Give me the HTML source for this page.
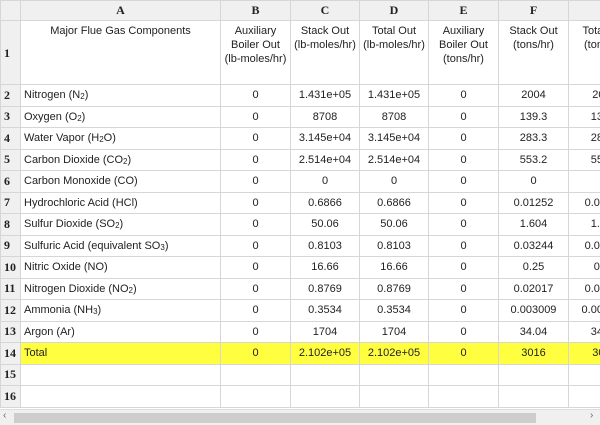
<!DOCTYPE html><html><head><style>
body{margin:0;width:600px;height:424px;overflow:hidden;background:#fff;position:relative;font-family:"Liberation Sans",Arial,sans-serif;font-size:11px;color:#222}
table{border-collapse:collapse;table-layout:fixed;position:absolute;left:0;top:0;width:640px}
td{border:1px solid #d6d6d6;padding:0 3px;height:20.5px;text-align:center;white-space:nowrap;overflow:hidden}
td.l{text-align:left}
tr.h td{background:#f0f0f0;font-family:"Liberation Serif",serif;font-weight:bold;font-size:12px;height:19px}
td.r{background:#f0f0f0;font-family:"Liberation Serif",serif;font-weight:bold;font-size:12px;text-align:left;padding:0 0 0 3px}
tr.t1 td{height:60px;vertical-align:top;padding-top:3px;line-height:14px;white-space:normal}
tr.t1 td.r{vertical-align:middle;padding-top:0}
tr.y td{background:#ffff40}
tr.y td.r{background:#f0f0f0}
.sb{position:absolute;left:0;top:409px;width:600px;height:15px;background:#f0f0f0;border-top:1px solid #ddd}
.th{position:absolute;left:14px;top:3px;width:522px;height:10px;background:#cdcdcd}
.ar{position:absolute;top:0;font-size:10px;color:#666}
sub{font-size:8px;vertical-align:-1px;line-height:0}
</style></head><body>
<table>
<colgroup><col style="width:20px"><col style="width:200px"><col style="width:70px"><col style="width:69px"><col style="width:69px"><col style="width:70px"><col style="width:70px"><col style="width:72px"></colgroup>
<tr class="h"><td></td><td>A</td><td>B</td><td>C</td><td>D</td><td>E</td><td>F</td><td>G</td></tr>
<tr class="t1"><td class="r">1</td><td>Major Flue Gas Components</td><td>Auxiliary Boiler Out (lb-moles/hr)</td><td>Stack Out (lb-moles/hr)</td><td>Total Out (lb-moles/hr)</td><td>Auxiliary Boiler Out (tons/hr)</td><td>Stack Out (tons/hr)</td><td>Total Out (tons/hr)</td></tr>
<tr><td class="r">2</td><td class="l">Nitrogen (N<sub>2</sub>)</td><td>0</td><td>1.431e+05</td><td>1.431e+05</td><td>0</td><td>2004</td><td>2004</td></tr>
<tr><td class="r">3</td><td class="l">Oxygen (O<sub>2</sub>)</td><td>0</td><td>8708</td><td>8708</td><td>0</td><td>139.3</td><td>139.3</td></tr>
<tr><td class="r">4</td><td class="l">Water Vapor (H<sub>2</sub>O)</td><td>0</td><td>3.145e+04</td><td>3.145e+04</td><td>0</td><td>283.3</td><td>283.3</td></tr>
<tr><td class="r">5</td><td class="l">Carbon Dioxide (CO<sub>2</sub>)</td><td>0</td><td>2.514e+04</td><td>2.514e+04</td><td>0</td><td>553.2</td><td>553.2</td></tr>
<tr><td class="r">6</td><td class="l">Carbon Monoxide (CO)</td><td>0</td><td>0</td><td>0</td><td>0</td><td>0</td><td>0</td></tr>
<tr><td class="r">7</td><td class="l">Hydrochloric Acid (HCl)</td><td>0</td><td>0.6866</td><td>0.6866</td><td>0</td><td>0.01252</td><td>0.01252</td></tr>
<tr><td class="r">8</td><td class="l">Sulfur Dioxide (SO<sub>2</sub>)</td><td>0</td><td>50.06</td><td>50.06</td><td>0</td><td>1.604</td><td>1.604</td></tr>
<tr><td class="r">9</td><td class="l">Sulfuric Acid (equivalent SO<sub>3</sub>)</td><td>0</td><td>0.8103</td><td>0.8103</td><td>0</td><td>0.03244</td><td>0.03244</td></tr>
<tr><td class="r">10</td><td class="l">Nitric Oxide (NO)</td><td>0</td><td>16.66</td><td>16.66</td><td>0</td><td>0.25</td><td>0.25</td></tr>
<tr><td class="r">11</td><td class="l">Nitrogen Dioxide (NO<sub>2</sub>)</td><td>0</td><td>0.8769</td><td>0.8769</td><td>0</td><td>0.02017</td><td>0.02017</td></tr>
<tr><td class="r">12</td><td class="l">Ammonia (NH<sub>3</sub>)</td><td>0</td><td>0.3534</td><td>0.3534</td><td>0</td><td>0.003009</td><td>0.003009</td></tr>
<tr><td class="r">13</td><td class="l">Argon (Ar)</td><td>0</td><td>1704</td><td>1704</td><td>0</td><td>34.04</td><td>34.04</td></tr>
<tr class="y"><td class="r">14</td><td class="l">Total</td><td>0</td><td>2.102e+05</td><td>2.102e+05</td><td>0</td><td>3016</td><td>3016</td></tr>
<tr><td class="r">15</td><td></td><td></td><td></td><td></td><td></td><td></td><td></td></tr>
<tr><td class="r">16</td><td></td><td></td><td></td><td></td><td></td><td></td><td></td></tr>
</table>
<div class="sb"><span class="ar" style="left:3px">&lsaquo;</span><div class="th"></div><span class="ar" style="left:590px">&rsaquo;</span></div>
</body></html>
